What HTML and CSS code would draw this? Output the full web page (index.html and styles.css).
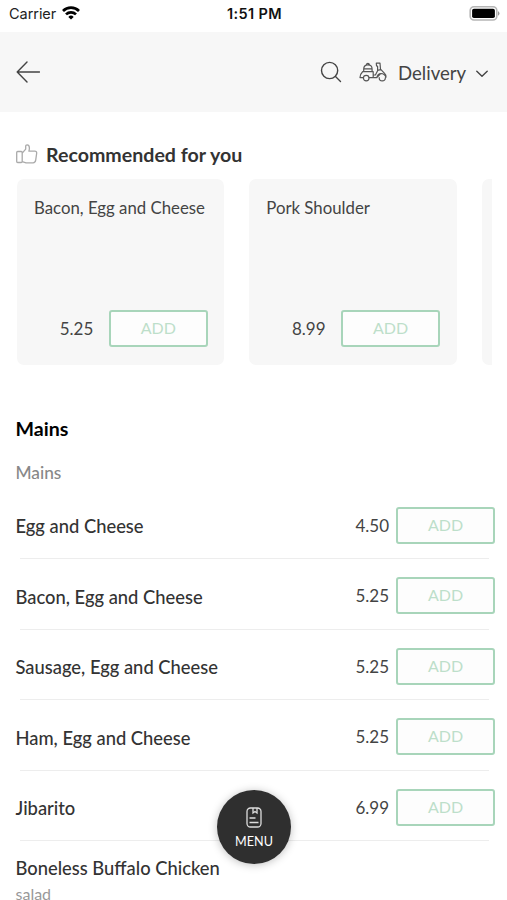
FILE: index.html
```html
<!DOCTYPE html>
<html lang="en">
<head>
<meta charset="utf-8">
<meta name="viewport" content="width=device-width, initial-scale=1">
<title>Menu</title>
<link rel="stylesheet" href="styles.css">
</head>
<body>
<div class="status">
  <div class="carrier"><span>Carrier</span>
    <svg width="18" height="14" viewBox="0 0 18 14"><g fill="none" stroke="#000" stroke-width="2.7"><path d="M1 5a11.4 11.4 0 0 1 16 0"/><path d="M4 8.4a7.2 7.2 0 0 1 10 0"/></g><path d="M9 13.6 6.3 10.9a3.9 3.9 0 0 1 5.4 0z"/></svg>
  </div>
  <time>1:51 PM</time>
  <svg class="battery" width="31" height="15" viewBox="0 0 31 15"><rect x="1.2" y=".8" width="26.6" height="13.2" rx="3.8" fill="#fff" stroke="#b5b5b5" stroke-width="1.6"/><rect x="3.1" y="2.7" width="22.8" height="9.4" rx="1.8"/><path d="M29 5.1q3 2.3 0 4.6z" fill="#999"/></svg>
</div>
<header class="bar">
  <svg class="back" width="24" height="22" viewBox="0 0 24 22"><path d="M23.5 11H1.2M11 1 1.2 11l9.8 10"/></svg>
  <svg class="search" width="22" height="22" viewBox="0 0 22 22"><circle cx="9.6" cy="9.5" r="8.1"/><path d="m15.5 15.5 5 5"/></svg>
  <svg class="scooter" width="28" height="20" viewBox="0 0 28 20"><path d="M4.7 9.5V7.2q0-4.4 4.2-4.4t4.2 4.4v2.3M7.5 2.8q0-1.5 1.4-1.5t1.4 1.5M4.8 6.8H13M3.6 9.7h10.6v5.4M3.6 9.7Q1 12.2 1 15.6h3.3M10.2 15.6h7.6l3.2-3.2M14.2 13h2.2l2.2-4.2V4.6q-1.6-.8-1.3-3.4H21l.5 6 4.3 4.4q1.4 1.3 1.2 3.6M18.6 8.4l3.1-.8M17.8 15.6q.7-4 4.2-4.1 3.7.2 5 3.7"/><circle cx="7.2" cy="16.1" r="2.8"/><path d="M20.2 15.7q0 3.2 3 3.2t3.2-3.2"/></svg>
  <span class="mode">Delivery</span>
  <svg class="chevron" width="12" height="8" viewBox="0 0 12 8"><path d="m.8 1.2 5.2 5 5.2-5"/></svg>
</header>
<main>
  <section class="recommended">
    <h2><svg width="22" height="20" viewBox="0 0 22 20"><path d="M1.7 7.5h3.5q1 0 1 1v9q0 1-1 1H1.7q-1 0-1-1v-9q0-1 1-1zM6.2 9.2l3.5-4.1V2.3Q9.7.8 11.2.8q2.2 0 2.2 3.3 0 1.5-.5 3h6q1.8 0 1.8 1.9l-1 7.2q-.4 2.6-2.6 2.6H10l-3.8-1.2"/></svg>Recommended for you</h2>
    <div class="carousel">
      <article class="card"><h3>Bacon, Egg and Cheese</h3><div class="buy"><span class="price">5.25</span><button class="add">ADD</button></div></article>
      <article class="card"><h3>Pork Shoulder</h3><div class="buy"><span class="price">8.99</span><button class="add">ADD</button></div></article>
      <article class="card"></article>
    </div>
  </section>
  <section class="mains">
    <h2>Mains</h2>
    <p class="category">Mains</p>
    <div class="row"><span class="name">Egg and Cheese</span><span class="price">4.50</span><button class="add">ADD</button></div>
    <div class="row"><span class="name">Bacon, Egg and Cheese</span><span class="price">5.25</span><button class="add">ADD</button></div>
    <div class="row"><span class="name">Sausage, Egg and Cheese</span><span class="price">5.25</span><button class="add">ADD</button></div>
    <div class="row"><span class="name">Ham, Egg and Cheese</span><span class="price">5.25</span><button class="add">ADD</button></div>
    <div class="row"><span class="name">Jibarito</span><span class="price">6.99</span><button class="add">ADD</button></div>
    <div class="last"><span class="name">Boneless Buffalo Chicken</span><span class="desc">salad</span></div>
  </section>
</main>
<button class="menu"><svg width="16" height="21" viewBox="0 0 16 21"><rect x="1" y="1" width="14" height="19" rx="3.5"/><path d="M7 1v5l2-1.5L11 6V1M3.5 11h6M3.5 15.5h9"/></svg>MENU</button>
</body>
</html>
```
FILE: styles.css
```css
* { box-sizing: border-box; }
body { margin: 0; width: 507px; height: 900px; overflow: hidden; background: #fff; color: #333; font-family: Lato, sans-serif; position: relative; }
h2, h3, p { margin: 0; }
svg { display: block; flex: none; }
button { font-family: inherit; padding: 0; }
.status { height: 32px; padding: 0 7px 5px 9px; display: grid; grid-template-columns: 1fr auto 1fr; align-items: center; font: 14.5px/20px Inter, sans-serif; }
.carrier { display: flex; align-items: center; gap: 6px; color: #222; letter-spacing: -.05px; }
.carrier svg { margin-top: -2px; }
.status time { font-weight: 600; color: #111; letter-spacing: .35px; }
.battery { justify-self: end; }
.bar { height: 80px; padding: 0 19px 0 16px; background: #f7f7f7; display: flex; align-items: center; }
.bar svg { fill: none; stroke: #444; stroke-width: 1.4; stroke-linecap: round; stroke-linejoin: round; }
.search { margin-left: auto; }
.bar .scooter { margin-left: 17px; stroke-width: 1.2; stroke: #555; }
.mode { width: 69px; margin: 1px 9px 0 11px; font-size: 18.6px; line-height: 24px; white-space: nowrap; color: #444; }
.bar .chevron { margin-top: 3px; }
.recommended { padding: 30px 15px 0 16px; }
.recommended h2 { height: 25px; display: flex; align-items: center; gap: 8px; font-size: 19.6px; line-height: 25px; font-weight: 700; white-space: nowrap; }
.recommended h2 svg { margin-top: -1px; fill: none; stroke: #aaa; stroke-width: 1.3; stroke-linejoin: round; }
.carousel { margin: 12px 0 0 1px; display: flex; gap: 25px; overflow: hidden; }
.card { flex: none; width: 207.3px; height: 185.5px; border-radius: 7px; background: #f7f7f7; padding: 16.5px 16.5px 17.5px 17px; display: flex; flex-direction: column; justify-content: space-between; }
.card h3 { font-size: 16.8px; line-height: 24px; font-weight: 400; color: #444; white-space: nowrap; }
.buy { display: flex; justify-content: flex-end; align-items: center; gap: 15.5px; }
.price { font-size: 17px; line-height: 24px; color: #444; position: relative; top: .5px; }
.add { width: 99px; height: 37px; flex: none; border: 2px solid #a8d5ba; border-radius: 3px; background: #fdfdfd; color: #bddfca; font-size: 16px; line-height: 20px; padding-bottom: 1px; }
.mains { padding: 49.5px 12px 0 15.5px; }
.mains h2 { font-size: 19.6px; line-height: 30px; font-weight: 700; color: #000; }
.category { margin-top: 16px; font-size: 17.3px; line-height: 26px; font-weight: 500; color: #888; }
.row { height: 70.5px; display: flex; align-items: center; gap: 7px; padding-top: 2.5px; background: linear-gradient(#ededed, #ededed) 4px 100% / 469px 1px no-repeat; }
.mains .row:first-of-type { margin-top: 2.5px; }
.name { font-size: 18.35px; line-height: 26px; font-weight: 500; white-space: nowrap; }
.row .name { position: relative; top: 1px; }
.row .price { margin-left: auto; }
.last { padding-top: 14px; display: flex; flex-direction: column; }
.desc { margin-top: 1px; font-size: 16px; line-height: 24px; color: #999; }
.menu { position: absolute; left: 217px; top: 790px; width: 74px; height: 74px; border: 0; border-radius: 50%; background: #2f2f2f; color: #fff; display: flex; flex-direction: column; align-items: center; justify-content: center; gap: 5px; padding-top: 3px; font-size: 12.6px; line-height: 18px; box-shadow: 0 1px 8px rgba(0,0,0,.25); }
.menu svg { fill: none; stroke: #ddd; stroke-width: 1.3; }
```
